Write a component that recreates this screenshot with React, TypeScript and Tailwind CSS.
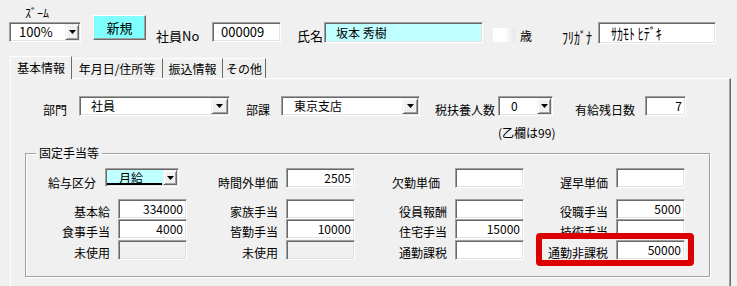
import React from "react";

const sunken =
  "border border-t-[#a0a0a0] border-l-[#a0a0a0] border-b-white border-r-white shadow-[inset_1px_1px_0_#696969,inset_-1px_-1px_0_#e3e3e3]";

function DropBtn({ w = 16 }: { w?: number }) {
  return (
    <div
      className="h-full flex items-center justify-center bg-[#f0f0f0] border border-t-[#f0f0f0] border-l-[#f0f0f0] border-r-[#696969] border-b-[#696969] shadow-[inset_1px_1px_0_white,inset_-1px_-1px_0_#a0a0a0] shrink-0"
      style={{ width: w }}
    >
      <svg width="7" height="4" viewBox="0 0 7 4">
        <path d="M0 0H7L3.5 4Z" fill="#000" />
      </svg>
    </div>
  );
}

function Combo({
  w,
  h = 20,
  text,
  bg = "bg-white",
  pl = 10,
  size = "text-[12px]",
  btnW = 16,
  underline = false,
}: {
  w: number;
  h?: number;
  text: string;
  bg?: string;
  pl?: number;
  size?: string;
  btnW?: number;
  underline?: boolean;
}) {
  return (
    <div className={`flex shrink-0 p-[1px] ${sunken} ${bg}`} style={{ width: w, height: h }}>
      <div className="flex-1 relative flex items-center leading-[14px]" style={{ paddingLeft: pl }}>
        <span className={size}>{text}</span>
        {underline && <div className="absolute left-0 right-[1px] bottom-0 h-[2px] bg-black" />}
      </div>
      <DropBtn w={btnW} />
    </div>
  );
}

function Input({
  w,
  h = 20,
  text = "",
  bg = "bg-white",
  right = true,
  pl = 8,
  size = "text-[12px]",
  tall = false,
}: {
  w: number;
  h?: number;
  text?: string;
  bg?: string;
  right?: boolean;
  pl?: number;
  size?: string;
  tall?: boolean;
}) {
  return (
    <div
      className={`flex items-center shrink-0 leading-[14px] ${size} ${sunken} ${bg} ${right ? "justify-end pr-[3px]" : ""}`}
      style={{ width: w, height: h, paddingLeft: right ? 0 : pl }}
    >
      {tall ? <span className="inline-block scale-y-[1.3]">{text}</span> : text}
    </div>
  );
}

function Cell({ label, lw, pr = 8, value = "", disabled = false, pt = 6 }: { label: string; lw: number; pr?: number; value?: string; disabled?: boolean; pt?: number }) {
  return (
    <div className="flex items-start">
      <div className="text-right text-[12px] leading-[14px] whitespace-nowrap" style={{ width: lw, paddingRight: pr, paddingTop: pt }}>
        {label}
      </div>
      <Input w={69} text={value} bg={disabled ? "bg-[#f0f0f0]" : "bg-white"} />
    </div>
  );
}

export default function App() {
  return (
    <div className="relative w-[737px] h-[286px] overflow-hidden bg-[#f0f0f0] text-black font-['Noto_Sans_CJK_JP','Noto_Sans',sans-serif] flex flex-col">
      {/* top row */}
      <div className="flex items-start h-[56px] shrink-0">
        <div className="ml-[9px] pt-[6px] w-[72px]">
          <div className="h-[13px] mb-[3px] text-[12px] leading-[13px] pl-[16px]">ｽﾞｰﾑ</div>
          <Combo w={72} text="100%" pl={8} size="text-[13px]" btnW={14} />
        </div>
        <div className="ml-[12px] mt-[15px] w-[53px] h-[25px] bg-[#80ffff] border border-t-white border-l-white border-r-[#696969] border-b-[#696969] shadow-[inset_-1px_-1px_0_#a0a0a0] flex items-center justify-center text-[13px] leading-[14px]">
          新規
        </div>
        <div className="ml-[10px] mt-[29px] w-[56px] text-[13px] leading-[14px]">社員No</div>
        <div className="mt-[22px]">
          <Input w={69} text="000009" right={false} pl={8} size="text-[13px]" />
        </div>
        <div className="ml-[16px] mt-[29px] w-[27px] text-[13px] leading-[14px]">氏名</div>
        <div className="mt-[22px]">
          <Input w={159} h={21} text="坂本 秀樹" right={false} pl={11} bg="bg-[#c0ffff]" />
        </div>
        <div className="ml-[10px] mt-[28px] w-[22px] h-[14px] bg-[linear-gradient(to_right,#ffffff_55%,#e6e6e6)]" />
        <div className="ml-[5px] mt-[29px] text-[12px] leading-[14px]">歳</div>
        <div className="ml-[30px] mt-[30px] w-[36px] text-[12px] leading-[14px]">
          <span className="inline-block scale-y-[1.3]">ﾌﾘｶﾞﾅ</span>
        </div>
        <div className="mt-[22px]">
          <Input w={118} h={22} text="ｻｶﾓﾄ ﾋﾃﾞｷ" right={false} pl={12} size="text-[12px]" tall />
        </div>
      </div>

      {/* tabs */}
      <div className="flex items-end h-[22px] ml-[10px] shrink-0 text-[12px] leading-[14px]">
        <div className="relative z-10 -mb-px h-[23px] w-[62px] pt-[4px] text-center bg-[#f0f0f0] border-l border-t border-r border-l-white border-t-white border-r-[#696969]">
          基本情報
        </div>
        <div className="h-[20px] w-[91px] pt-[3px] text-center border-t border-r border-t-white border-r-[#696969]">年月日/住所等</div>
        <div className="h-[20px] w-[60px] pt-[3px] text-center border-t border-r border-t-white border-r-[#696969]">振込情報</div>
        <div className="h-[20px] w-[43px] pt-[3px] text-center border-t border-r border-t-white border-r-[#696969]">その他</div>
      </div>

      {/* panel */}
      <div className="ml-[10px] w-[721px] flex-1 border-t border-l border-r border-t-white border-l-white border-r-[#696969] shadow-[inset_-1px_0_0_#a0a0a0] flex flex-col">
        <div className="flex items-start mt-[17px] text-[12px] leading-[14px]">
          <div className="ml-[32px] w-[36px] pt-[7px]">部門</div>
          <Combo w={151} text="社員" pl={10} btnW={17} />
          <div className="ml-[16px] w-[35px] pt-[7px]">部課</div>
          <Combo w={139} text="東京支店" pl={11} btnW={16} />
          <div className="ml-[15px] w-[63px] pt-[7px]">税扶養人数</div>
          <Combo w={55} text="0" pl={11} btnW={14} />
          <div className="ml-[22px] w-[70px] pt-[7px]">有給残日数</div>
          <Input w={41} text="7" />
        </div>
        <div className="ml-[487px] mt-[9px] text-[12px] leading-[14px]">(乙欄は99)</div>

        {/* group box */}
        <div className="relative ml-[14px] mt-[13px] w-[685px] h-[124px] border border-[#a0a0a0] shadow-[1px_1px_0_white,inset_1px_1px_0_white]">
          <div className="absolute left-[10px] -top-[8px] px-[3px] bg-[#f0f0f0] text-[12px] leading-[14px]">固定手当等</div>
          <div className="flex items-start mt-[14px] text-[12px] leading-[14px]">
            <div className="ml-[22px] w-[57px] pt-[8px]">給与区分</div>
            <Combo w={74} h={19} text="月給" pl={12} btnW={14} bg="bg-[#c0ffff]" underline />
            <Cell label="時間外単価" lw={107} value="2505" pt={8} />
            <Cell label="欠勤単価" lw={100} pr={15} pt={8} />
            <Cell label="遅早単価" lw={92} pt={8} />
          </div>
          <div className="flex items-start mt-[9px]">
            <Cell label="基本給" lw={92} value="334000" />
            <Cell label="家族手当" lw={99} />
            <Cell label="役員報酬" lw={100} />
            <Cell label="役職手当" lw={92} value="5000" />
          </div>
          <div className="flex items-start">
            <Cell label="食事手当" lw={92} value="4000" />
            <Cell label="皆勤手当" lw={99} value="10000" />
            <Cell label="住宅手当" lw={100} value="15000" />
            <Cell label="技術手当" lw={92} />
          </div>
          <div className="flex items-start mt-[1px]">
            <Cell label="未使用" lw={92} disabled />
            <Cell label="未使用" lw={99} disabled />
            <Cell label="通勤課税" lw={100} />
            <Cell label="通勤非課税" lw={92} value="50000" />
          </div>
        </div>
      </div>

      {/* red highlight */}
      <div className="absolute left-[536px] top-[233px] w-[158px] h-[33px] border-[6px] border-[#dd0000] rounded-[4px] pointer-events-none" />
    </div>
  );
}
